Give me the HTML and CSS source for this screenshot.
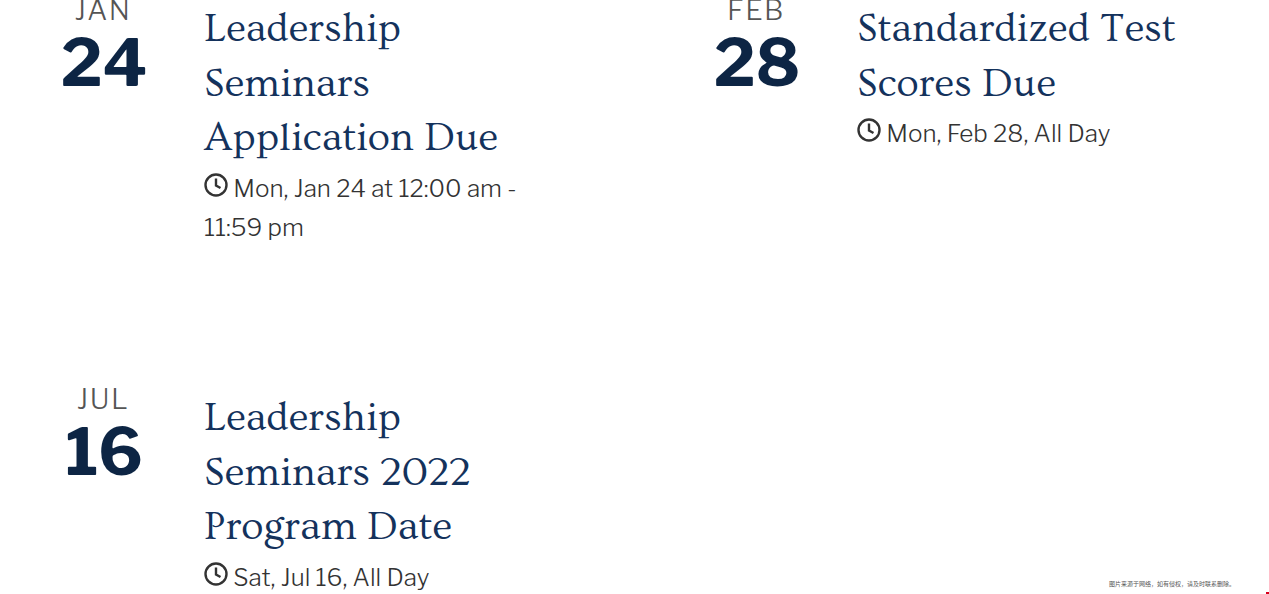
FILE: index.html
```html
<!DOCTYPE html>
<html lang="en">
<head>
    <meta charset="UTF-8">
    <title>Events</title>
    <link rel="stylesheet" href="styles.css">
</head>
<body>
    <div class="events">
        <div class="event">
            <div class="date">
                <div class="month">JAN</div>
                <div class="day">24</div>
            </div>
            <div class="info">
                <h3>Leadership Seminars Application Due</h3>
                <p class="when">
                    <svg class="clock" viewBox="0 0 24 24"><circle cx="12" cy="12" r="10.5"/><path d="M12 5.5V12.5L16.5 15"/></svg>
                    Mon, Jan 24 at 12:00 am - 11:59 pm
                </p>
            </div>
        </div>
        <div class="event">
            <div class="date">
                <div class="month">FEB</div>
                <div class="day">28</div>
            </div>
            <div class="info">
                <h3>Standardized Test Scores Due</h3>
                <p class="when">
                    <svg class="clock" viewBox="0 0 24 24"><circle cx="12" cy="12" r="10.5"/><path d="M12 5.5V12.5L16.5 15"/></svg>
                    Mon, Feb 28, All Day
                </p>
            </div>
        </div>
        <div class="event">
            <div class="date">
                <div class="month">JUL</div>
                <div class="day">16</div>
            </div>
            <div class="info">
                <h3>Leadership Seminars 2022 Program Date</h3>
                <p class="when">
                    <svg class="clock" viewBox="0 0 24 24"><circle cx="12" cy="12" r="10.5"/><path d="M12 5.5V12.5L16.5 15"/></svg>
                    Sat, Jul 16, All Day
                </p>
            </div>
        </div>
    </div>
    <div class="watermark">图片来源于网络，如有侵权，请及时联系删除。</div>
    <div class="red-dot"></div>
</body>
</html>
```

FILE: styles.css
```css
html, body {
    margin: 0;
    height: 594px;
    overflow: hidden;
    background-color: white;
}
body {
    position: relative;
    font-family: "Libre Franklin", "Inter", "Liberation Sans", sans-serif;
}
.events {
    display: grid;
    grid-template-columns: 653px 1fr;
    grid-auto-rows: 389px;
    margin-top: -5px;
    padding-left: 42px;
}
.event {
    display: flex;
}
.date {
    width: 162px;
    flex-shrink: 0;
    text-align: center;
    padding-right: 38px;
    box-sizing: border-box;
    color: #0d2544;
}
.month {
    padding-right: 2px;
    font-size: 28px;
    line-height: 30px;
    letter-spacing: 1.5px;
    color: #555;
    font-weight: 300;
}
.day {
    margin-top: 6px;
    font-size: 65px;
    line-height: 64px;
    font-weight: 700;
}
.info {
    width: 330px;
}
h3 {
    margin: 7px 0 0;
    font-family: "Ovo", "Liberation Serif", serif;
    font-size: 41px;
    line-height: 54.5px;
    font-weight: normal;
    color: #14325c;
}
.when {
    margin: 0;
    padding-top: 3px;
    font-size: 24.25px;
    line-height: 39px;
    color: #333;
    font-weight: 300;
}
.clock {
    width: 24px;
    height: 24px;
    fill: none;
    stroke: #333;
    stroke-width: 2.4;
    vertical-align: 0;
}
.watermark {
    position: absolute;
    right: 34px;
    bottom: 6px;
    font-family: "Noto Sans CJK SC", sans-serif;
    font-size: 6px;
    color: #555;
}
.red-dot {
    position: absolute;
    left: 1266px;
    top: 592px;
    width: 3px;
    height: 2px;
    background-color: #d8001c;
}
```
